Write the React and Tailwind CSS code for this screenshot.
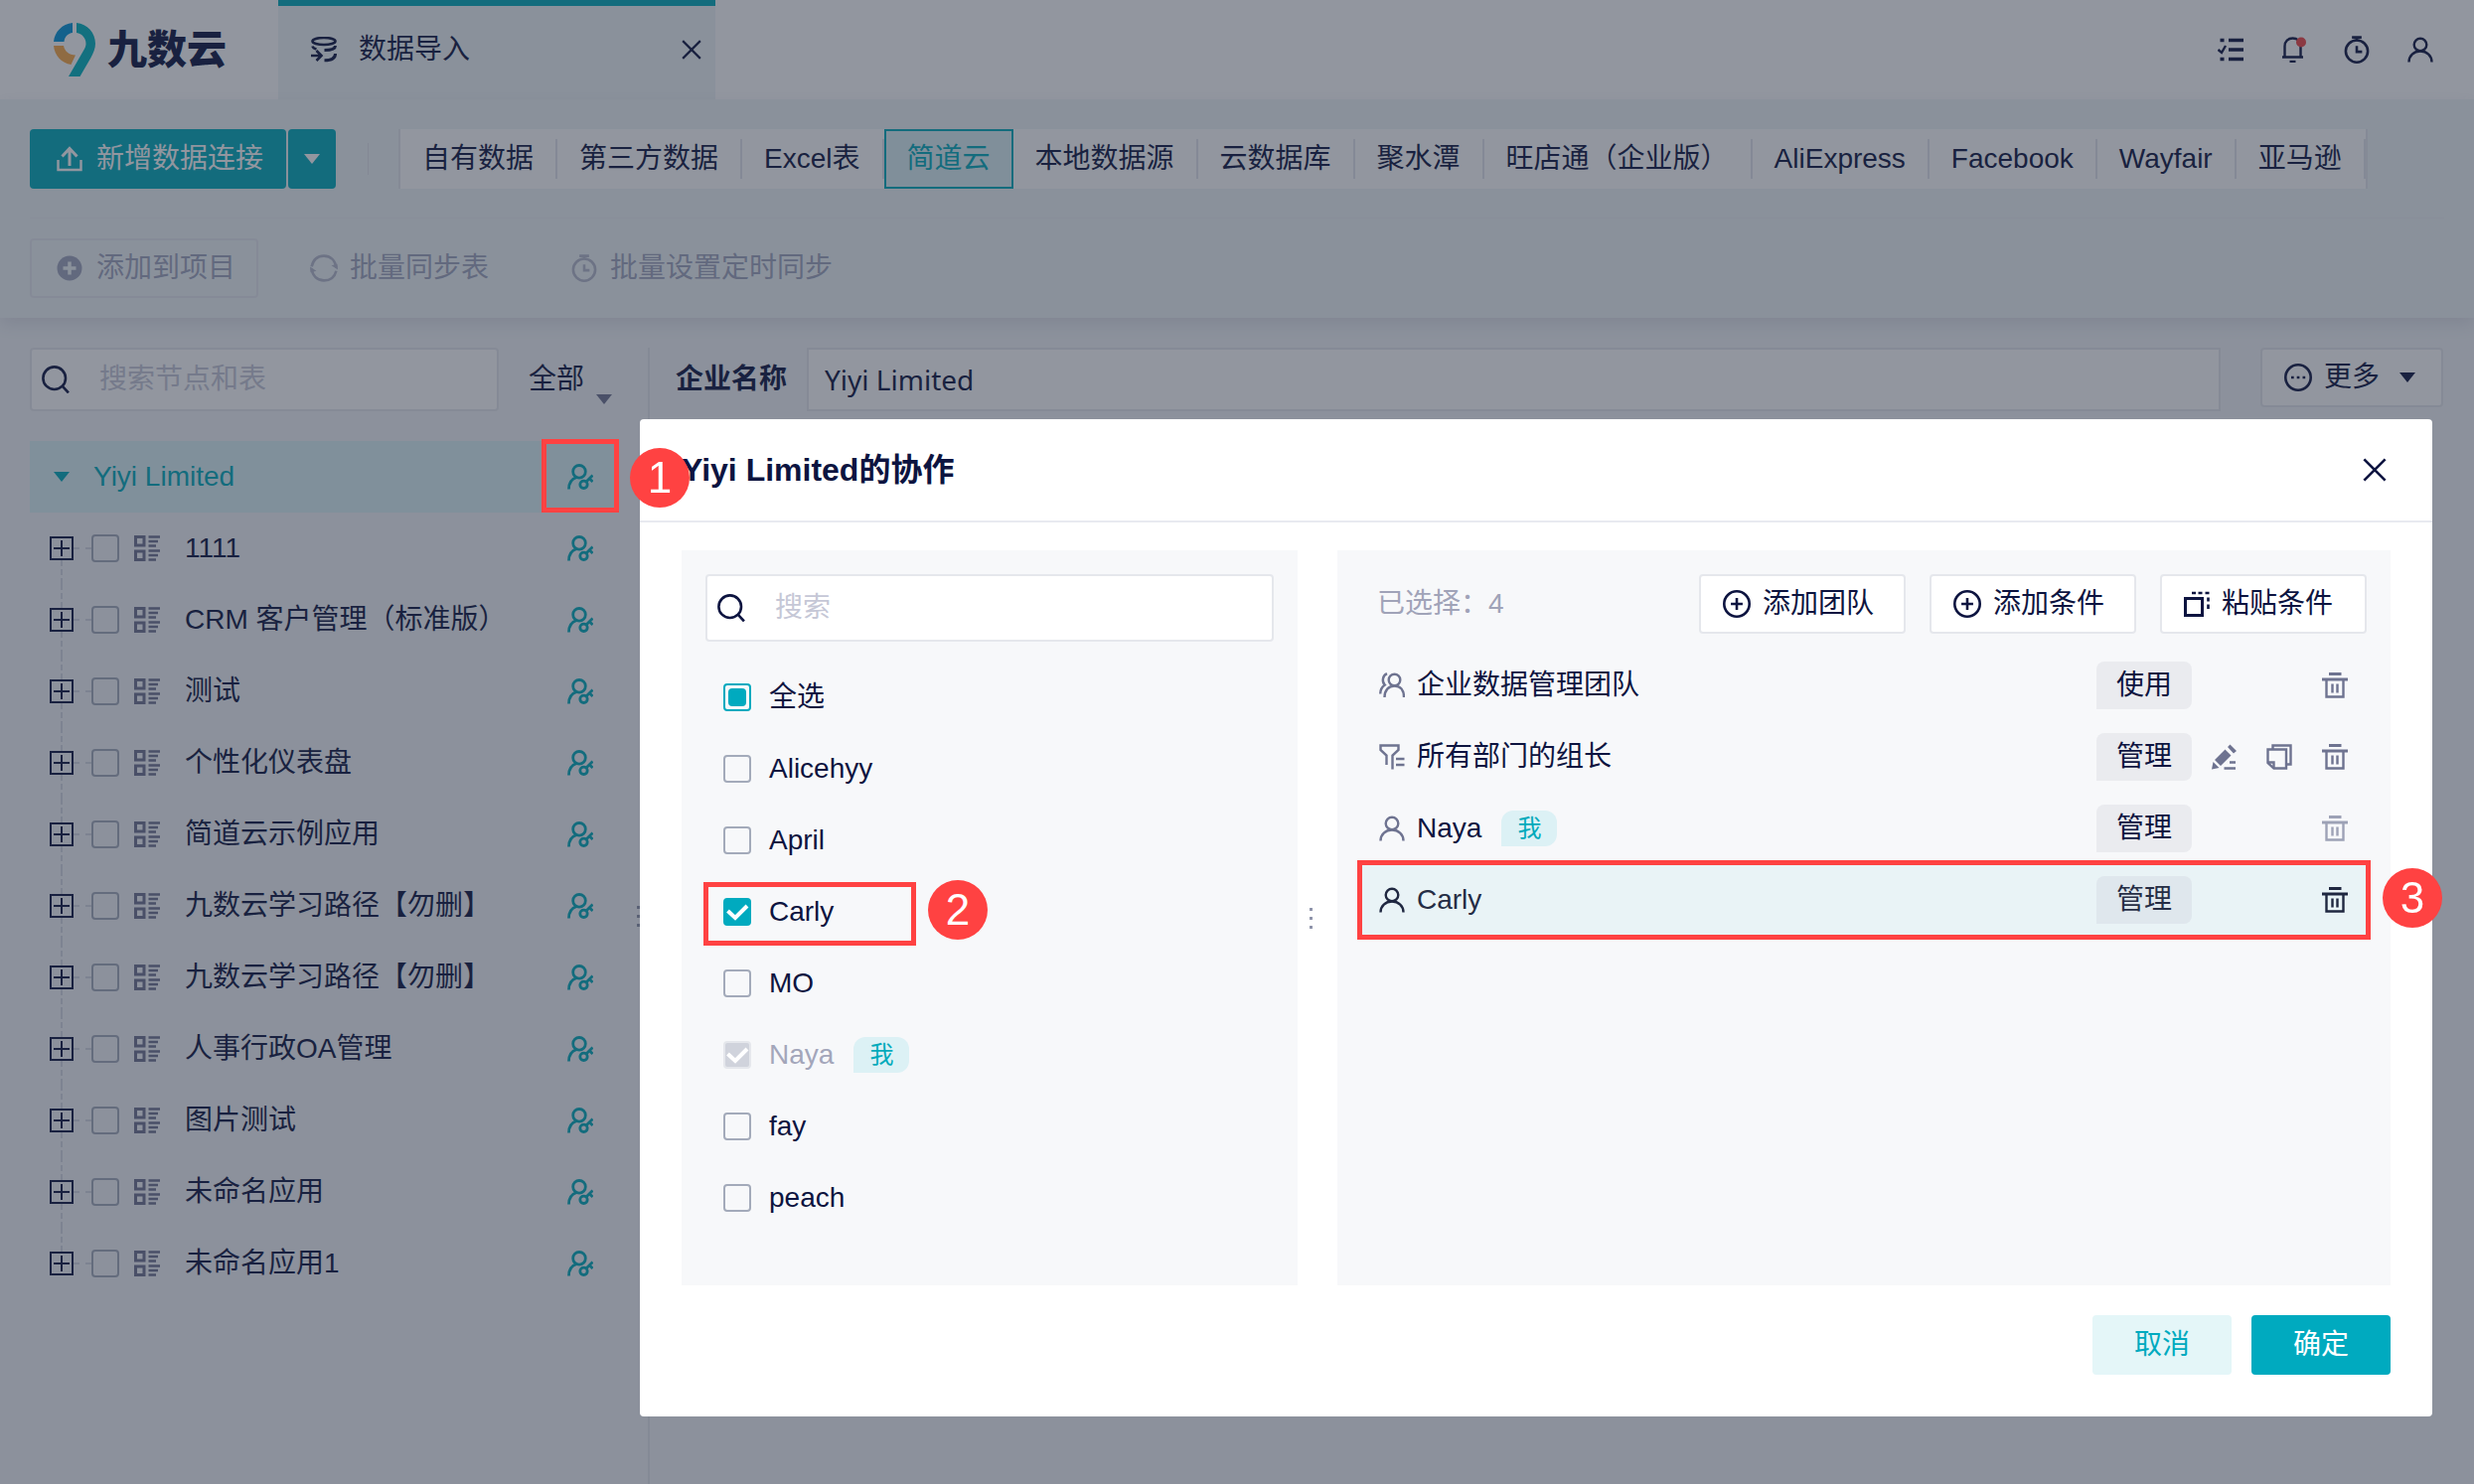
import React, { useState } from 'react';

const sources = ['自有数据', '第三方数据', 'Excel表', '简道云', '本地数据源', '云数据库', '聚水潭', '旺店通（企业版）', 'AliExpress', 'Facebook', 'Wayfair', '亚马逊'];

const apps = [
  '1111',
  'CRM 客户管理（标准版）',
  '测试',
  '个性化仪表盘',
  '简道云示例应用',
  '九数云学习路径【勿删】',
  '九数云学习路径【勿删】',
  '人事行政OA管理',
  '图片测试',
  '未命名应用',
  '未命名应用1',
];

const people = [
  { name: 'Alicehyy' },
  { name: 'April' },
  { name: 'Carly', marked: true },
  { name: 'MO' },
  { name: 'Naya', me: true, locked: true },
  { name: 'fay' },
  { name: 'peach' },
];

const selected = [
  { name: '企业数据管理团队', kind: 'team', role: '使用' },
  { name: '所有部门的组长', kind: 'filter', role: '管理', editable: true },
  { name: 'Naya', kind: 'user', role: '管理', me: true },
  { name: 'Carly', kind: 'user', role: '管理', active: true },
];

// ---------- icons ----------

const Svg = ({ size = 26, className = '', children }) => (
  <svg
    width={size}
    height={size}
    viewBox="0 0 26 26"
    fill="none"
    stroke="currentColor"
    strokeWidth="2.4"
    aria-hidden="true"
    className={`shrink-0 ${className}`}
  >
    {children}
  </svg>
);

const LogoMark = () => (
  <svg width="42" height="54" viewBox="0 0 42 54" aria-hidden="true" className="shrink-0">
    <path d="M23 0C34 1 42 10 42 21C42 26 40 30 37.500 35L26.500 54H15L30 28C31.500 25.500 32.500 23.500 32.500 21C32.500 15 28.500 11 23 10Z" fill="#01b3bf" />
    <path d="M19 0V10C14.500 10.500 11 14 10.500 19H0C1 9 8.500 1 19 0Z" fill="#0295d8" />
    <path d="M0 23H10C11 28.500 15.500 32.500 22 32.500L17.500 42C8 40.500 1 33 0 23Z" fill="#f9a845" />
  </svg>
);

const ImportIcon = () => (
  <Svg>
    <ellipse cx="13" cy="4.500" rx="11.500" ry="3.500" strokeWidth="2.600" />
    <path d="M24.500 9C24.500 12 20 13.500 13.500 13.500M24.500 17C24.500 22 20 23.800 13.500 23.800" strokeWidth="3" />
    <path d="M0 19H9.500M5.500 14L10.500 19L5.500 24M1.500 9.500C2 11.500 3.500 12 5.500 12.500" strokeWidth="2.600" />
  </Svg>
);

const CloseIcon = ({ size = 26 }) => (
  <Svg size={size}>
    <path d="M1.500 1.500L24.500 24.500M24.500 1.500L1.500 24.500" strokeWidth="2.900" />
  </Svg>
);

const ListIcon = () => (
  <Svg>
    <path d="M11 3.500H26M11 13H26M11 22.500H26" strokeWidth="3.600" />
    <path d="M2.500 3.500H6.500M2.500 22.500H6.500" strokeWidth="3.600" />
    <path d="M0.500 13L4 16L8 9" />
  </Svg>
);

const BellIcon = () => (
  <Svg>
    <path d="M2 20.500H23M4.500 20.500V9.500C4.500 4.500 8 1.500 12.500 1.500S20.500 4.500 20.500 9.500V20.500" />
    <path d="M9.500 25H15.500" />
    <circle cx="21" cy="5.500" r="5" fill="#f04444" stroke="none" />
  </Svg>
);

const WatchIcon = ({ size = 28, className }) => (
  <Svg size={size} className={className}>
    <circle cx="13" cy="14.500" r="10.300" />
    <path d="M8.500 1.500H17.500M13 2V5M13 9.500V15H18" />
  </Svg>
);

const UserIcon = ({ className }) => (
  <Svg className={className}>
    <circle cx="13" cy="8" r="6.300" />
    <path d="M1.500 25.500C1.500 19 6.500 14.500 13 14.500S24.500 19 24.500 25.500" />
  </Svg>
);

const TeamIcon = ({ className }) => (
  <Svg className={className}>
    <circle cx="15.500" cy="7.500" r="5.800" />
    <path d="M5.500 25C5.500 18 9.500 13.500 15.500 13.500S25 18 25 25" />
    <path d="M8 1.200C3 3.500 2.800 9.500 5.800 12.500C3 14.500 1.200 17.500 1.200 21.500" />
  </Svg>
);

const FilterIcon = ({ className }) => (
  <Svg className={className}>
    <path d="M7.500 21V11.500L1.500 6V1.500H19.500V6L13.500 11.500V25.500" />
    <path d="M17 15H25.500M17 21H25.500" />
  </Svg>
);

const UserKeyIcon = () => (
  <Svg>
    <g strokeWidth="2.800">
      <circle cx="12" cy="7.800" r="6.300" />
      <path d="M1.500 25.500C1.500 18.500 4.500 15 9.500 13.500" />
      <circle cx="16.500" cy="20.800" r="3.700" />
      <path d="M19 18L25.500 11.500M22 14.500L25.500 18" />
    </g>
  </Svg>
);

const SearchIcon = () => (
  <Svg size={28} className="text-[#0d1440]">
    <circle cx="11.800" cy="11.800" r="10.500" />
    <path d="M19 19L25 25.500" />
  </Svg>
);

const UploadIcon = () => (
  <Svg>
    <path d="M1.500 14V24H24.500V14" />
    <path d="M13 20V3M5.500 10.500L13 2.500L20.500 10.500" strokeWidth="3" />
  </Svg>
);

const PlusSolidIcon = () => (
  <Svg>
    <circle cx="13" cy="13" r="12.500" fill="currentColor" stroke="none" />
    <path d="M13 6.500V19.500M6.500 13H19.500" stroke="#eff5f7" strokeWidth="3.500" />
  </Svg>
);

const PlusCircleIcon = () => (
  <Svg size={28}>
    <circle cx="13" cy="13" r="11.800" />
    <path d="M13 7.500V18.500M7.500 13H18.500" />
  </Svg>
);

const SyncIcon = () => (
  <Svg size={28} className="text-[#b4b8cb]">
    <path d="M1.500 11.500C3 5 7.500 1.500 13 1.500C19 1.500 23.500 5.500 24.500 12.500" />
    <path d="M24.500 15.500C23 21.500 18.500 24.500 13 24.500C7 24.500 2.500 20.500 1.500 13.500" />
    <path d="M0 11.500L6 15.500L0.500 17ZM26 14.500L20 10.500L25.500 9Z" fill="currentColor" stroke="none" />
  </Svg>
);

const MoreIcon = () => (
  <Svg size={28}>
    <circle cx="13" cy="13" r="11.800" />
    <path d="M6.500 13H9M11.800 13H14.300M17.200 13H19.700" />
  </Svg>
);

const PasteIcon = () => (
  <Svg>
    <path d="M1.500 7.500H18.500V24.500H1.500Z" strokeWidth="3" />
    <path d="M8 2H12M14.500 2H18.500M21.500 2H25.500M24.500 6.500V10.500M24.500 13.500V18" strokeWidth="2.600" />
  </Svg>
);

const AppIcon = () => (
  <Svg className="text-[#6e7390]">
    <path d="M1.500 1.500H10V10H1.500ZM1.500 16H10V24.500H1.500Z" strokeWidth="3" />
    <path d="M14.500 1.500H26M14.500 6H24M14.500 10.500H22M14.500 15.500H26M14.500 20H24M14.500 24.500H22" />
  </Svg>
);

const TrashIcon = () => (
  <Svg>
    <path d="M7 1.500H19.500M0 7H26" strokeWidth="3" />
    <path d="M4.500 8V24.500H21.500V8M10.500 11.500V20.500M15.500 11.500V20.500" />
  </Svg>
);

const EditIcon = () => (
  <Svg>
    <path d="M4 16L14.500 5.500L20.500 11.500L10 22Z M17 3L19.500 0.500L26 7L23 9.500Z M2.500 18L8.500 24L1 25.500Z" fill="currentColor" stroke="none" />
    <path d="M19 18.500H25M13.500 24.500H25" />
  </Svg>
);

const CopyIcon = () => (
  <Svg>
    <path d="M6.500 5V1.500H24.500V20.500H21" />
    <path d="M1.500 5.500H20V24.500H7.500L1.500 19Z" />
    <path d="M1.500 18.500H7.500V24.500" />
  </Svg>
);

const CheckMark = () => (
  <svg width="28" height="28" viewBox="0 0 28 28" fill="none" stroke="#fff" strokeWidth="4" aria-hidden="true" className="pointer-events-none absolute inset-0">
    <path d="M4.500 13L12 20L24 8" />
  </svg>
);

const Caret = ({ className = '' }) => (
  <svg width="16" height="10" viewBox="0 0 16 10" fill="currentColor" aria-hidden="true" className={`shrink-0 ${className}`}>
    <path d="M0 0H16L8 10Z" />
  </svg>
);

// ---------- small parts ----------

const Badge = ({ n, className }) => (
  <span className={`absolute z-10 flex size-[60px] items-center justify-center rounded-full bg-[#ff4242] font-['Liberation_Sans',sans-serif] text-[44px] leading-none text-white ${className}`}>
    {n}
  </span>
);

const MeTag = () => (
  <span className="flex h-9 w-14 items-center justify-center rounded-xl rounded-bl-none bg-[#dcf1f5] text-[24px] leading-none text-[#00aabb]">我</span>
);

const Dots = ({ className = '' }) => (
  <span className={`flex flex-col gap-1.5 ${className}`}>
    <i className="size-[3px] bg-[#8f94ab]" />
    <i className="size-[3px] bg-[#8f94ab]" />
    <i className="size-[3px] bg-[#8f94ab]" />
  </span>
);

const SearchBox = ({ placeholder, className }) => (
  <label className={`flex items-center gap-[30px] rounded border-2 border-[#e5e7ec] bg-white pl-2.5 ${className}`}>
    <SearchIcon />
    <input type="text" aria-label={placeholder} placeholder={placeholder} className="w-full min-w-0 bg-transparent outline-none placeholder:text-[#c5c7d6]" />
  </label>
);

const SourceBar = () => (
  <nav className="flex h-[60px] items-stretch border-x-2 border-[#e5e7ec] bg-white">
    {sources.map((name) =>
      name === '简道云' ? (
        <button key={name} className="border-2 border-[#00aabb] bg-[#dbf1f5] px-[21px] text-[#00aabb]">
          {name}
        </button>
      ) : (
        <button key={name} className="flex items-center justify-between pl-[22px]">
          {name}
          <i className="ml-[22px] h-10 w-0.5 bg-[#e3e5ec]" />
        </button>
      )
    )}
  </nav>
);

const TreeRow = ({ name, index }) => (
  <li className="flex h-[72px] items-center pr-[25px] pl-5">
    <span className="flex h-full w-6 flex-col items-center">
      <i className={`flex-1 border-l-2 border-dashed ${index === 0 ? 'border-transparent' : 'border-[#d4d8e2]'}`} />
      <button aria-label="展开" className="flex size-6 items-center justify-center border-2 border-[#0d1440]">
        <svg width="16" height="16" viewBox="0 0 16 16" stroke="currentColor" strokeWidth="2" aria-hidden="true">
          <path d="M8 0V16M0 8H16" />
        </svg>
      </button>
      <i className={`flex-1 border-l-2 border-dashed ${index === apps.length - 1 ? 'border-transparent' : 'border-[#d4d8e2]'}`} />
    </span>
    <i className="w-[18px] border-t-2 border-dashed border-[#d4d8e2]" />
    <input type="checkbox" id={`app-${index}`} className="size-7 shrink-0 appearance-none rounded border-2 border-[#a3aaba]" />
    <span className="ml-[15px] flex">
      <AppIcon />
    </span>
    <label htmlFor={`app-${index}`} className="ml-[25px] flex-1 whitespace-nowrap">
      {name}
    </label>
    <button aria-label="协作" className="text-[#00aabb]">
      <UserKeyIcon />
    </button>
  </li>
);

const PersonRow = ({ person, checked, onToggle }) => {
  const { name, locked, me, marked } = person;
  let box = 'border-[#a3aaba]';
  if (locked) box = 'border-[#e5e7ec] bg-[#d0d3dc]';
  else if (checked) box = 'border-[#00aabf] bg-[#00aabf]';

  return (
    <li className="relative flex h-[72px] items-center pl-[18px]">
      <label className={`flex items-center gap-[18px] ${locked ? 'text-[#a3a6ba]' : ''}`}>
        <span className="relative flex">
          <input type="checkbox" checked={checked} disabled={locked} onChange={onToggle} className={`size-7 appearance-none rounded border-2 ${box}`} />
          {checked && <CheckMark />}
        </span>
        {name}
      </label>
      {me && (
        <span className="ml-5">
          <MeTag />
        </span>
      )}
      {marked && (
        <>
          <span className="pointer-events-none absolute top-1.5 -left-0.5 h-16 w-[214px] border-5 border-[#ff4242]" />
          <Badge n="2" className="top-1 left-[224px]" />
        </>
      )}
    </li>
  );
};

const kindIcons = { team: TeamIcon, filter: FilterIcon, user: UserIcon };

const SelectedRow = ({ item }) => {
  const Icon = kindIcons[item.kind];
  return (
    <li className={`relative flex h-[72px] items-center pr-1.5 pl-5 ${item.active ? 'bg-[#e9f3f6] text-[#252d45]' : ''}`}>
      <Icon className={item.active ? 'text-[#1f2740]' : 'text-[#6e7390]'} />
      <span className="ml-3">{item.name}</span>
      {item.me && (
        <span className="ml-5">
          <MeTag />
        </span>
      )}
      <button className={`mr-1 ml-auto h-12 w-24 rounded-lg rounded-bl-none ${item.active ? 'bg-[#dfe7ed]' : 'bg-[#eaebef]'}`}>{item.role}</button>
      <span className={`flex w-[168px] justify-end ${item.active ? 'text-[#1f2740]' : item.me ? 'text-[#9da2b6]' : 'text-[#6e7390]'}`}>
        {item.editable && (
          <>
            <button aria-label="编辑" className="flex w-14 justify-center">
              <EditIcon />
            </button>
            <button aria-label="复制" className="flex w-14 justify-center">
              <CopyIcon />
            </button>
          </>
        )}
        <button aria-label="删除" className="flex w-14 justify-center">
          <TrashIcon />
        </button>
      </span>
      {item.active && (
        <>
          <span className="pointer-events-none absolute -inset-x-0.5 -inset-y-1 border-5 border-[#ff4242]" />
          <Badge n="3" className="top-1 -right-[74px]" />
        </>
      )}
    </li>
  );
};

const ToolButton = ({ icon, children }) => (
  <button className="flex h-[60px] w-[208px] items-center gap-3 rounded border-2 border-[#e5e7ec] bg-white pl-[22px] whitespace-nowrap">
    {icon}
    {children}
  </button>
);

const ShareDialog = () => {
  const [checked, setChecked] = useState(['Carly', 'Naya']);

  const toggle = (name) =>
    setChecked((list) => (list.includes(name) ? list.filter((n) => n !== name) : [...list, name]));

  return (
    <div className="fixed inset-0 flex items-start justify-end bg-[#252d3f]/50 pt-[422px] pr-[42px]">
      <section role="dialog" aria-label="Yiyi Limited的协作" className="relative w-full max-w-[1804px] rounded bg-white">
        <span className="pointer-events-none absolute top-5 -left-[99px] h-[74px] w-[78px] border-5 border-[#ff4242]" />
        <Badge n="1" className="top-[29px] -left-2.5" />

        <header className="flex h-[104px] items-center justify-between border-b-2 border-[#e8eaf0] pr-[46px] pl-[42px]">
          <h2 className="text-[32px] font-bold">Yiyi Limited的协作</h2>
          <button aria-label="关闭">
            <CloseIcon size={24} />
          </button>
        </header>

        <div className="flex px-[42px] pt-7">
          <div className="min-h-[740px] w-[620px] bg-[#f7f8fa] p-6">
            <SearchBox placeholder="搜索" className="h-[68px]" />
            <ul className="mt-5">
              <li className="flex h-[72px] items-center pl-[18px]">
                <label className="flex items-center gap-[18px]">
                  <span className="relative flex">
                    <input type="checkbox" className="size-7 appearance-none rounded border-2 border-[#00aabf]" />
                    <i className="pointer-events-none absolute inset-[5px] rounded-sm bg-[#00aabf]" />
                  </span>
                  全选
                </label>
              </li>
              {people.map((p) => (
                <PersonRow key={p.name} person={p} checked={checked.includes(p.name)} onToggle={() => toggle(p.name)} />
              ))}
            </ul>
          </div>

          <Dots className="w-10 self-center pl-3" />

          <div className="min-w-0 flex-1 bg-[#f7f8fa] px-[22px] pt-6">
            <div className="flex items-center gap-6 pr-0.5 pl-[18px]">
              <span className="mr-auto text-[#a0a3b8]">已选择：4</span>
              <ToolButton icon={<PlusCircleIcon />}>添加团队</ToolButton>
              <ToolButton icon={<PlusCircleIcon />}>添加条件</ToolButton>
              <ToolButton icon={<PasteIcon />}>粘贴条件</ToolButton>
            </div>
            <ul className="mt-4">
              {selected.map((item) => (
                <SelectedRow key={item.name} item={item} />
              ))}
            </ul>
          </div>
        </div>

        <footer className="flex justify-end gap-5 px-[42px] pt-[30px] pb-[42px]">
          <button className="h-[60px] w-[140px] rounded bg-[#e4f6f8] text-[#00aabf]">取消</button>
          <button className="h-[60px] w-[140px] rounded bg-[#00aabf] text-white">确定</button>
        </footer>
      </section>
    </div>
  );
};

const App = () => {
  return (
    <div className="flex min-h-screen flex-col bg-[#f2f5f8] font-['Liberation_Sans','Noto_Sans_CJK_SC',sans-serif] text-[28px] leading-10 text-[#0d1440]">
      <header className="flex h-[100px] items-center bg-white pr-[41px]">
        <div className="flex w-[280px] items-center gap-3 pl-[54px]">
          <LogoMark />
          <span className="text-[40px] font-black whitespace-nowrap">九数云</span>
        </div>
        <div className="flex h-full w-[440px] items-center border-t-[6px] border-[#00aabb] bg-[#eff5f7] px-3.5 pb-1.5">
          <span className="ml-[19px] flex">
            <ImportIcon />
          </span>
          <span className="ml-[22px] flex-1">数据导入</span>
          <button aria-label="关闭标签">
            <CloseIcon size={20} />
          </button>
        </div>
        <div className="ml-auto flex items-center gap-[37px]">
          <button aria-label="任务"><ListIcon /></button>
          <button aria-label="消息"><BellIcon /></button>
          <button aria-label="定时"><WatchIcon /></button>
          <button aria-label="账户"><UserIcon /></button>
        </div>
      </header>

      <section className="relative bg-[#eff5f7] px-[30px] pt-[30px] pb-5 shadow-[0_6px_16px_rgba(60,60,100,0.12)]">
        <div className="flex h-[60px] items-center">
          <button className="flex h-full w-[258px] items-center gap-3.5 rounded bg-[#00aabb] pl-[27px] whitespace-nowrap text-white">
            <UploadIcon />
            新增数据连接
          </button>
          <button aria-label="更多连接方式" className="ml-0.5 flex h-full w-12 items-center justify-center rounded bg-[#00aabb] text-white">
            <Caret />
          </button>
          <i className="mr-[30px] ml-8 h-8 w-px bg-[#e0e3ea]" />
          <SourceBar />
        </div>
        <div className="mt-[29px] flex items-center border-t border-[#eceef4] pt-5 text-[#9fa4bd]">
          <button className="flex h-[60px] items-center gap-3.5 rounded border-2 border-[#e5e7ee] pr-[21px] pl-[25px]">
            <PlusSolidIcon />
            添加到项目
          </button>
          <button className="ml-[52px] flex items-center gap-3">
            <SyncIcon />
            批量同步表
          </button>
          <button className="ml-[82px] flex items-center gap-3">
            <WatchIcon className="text-[#b4b8cb]" />
            批量设置定时同步
          </button>
        </div>
      </section>

      <main className="flex flex-1 pt-[30px]">
        <aside className="flex w-[654px] shrink-0 border-r-2 border-[#e3e6ec] pl-[30px]">
          <div className="w-[592px]">
            <div className="flex h-16">
              <SearchBox placeholder="搜索节点和表" className="h-full w-[472px]" />
              <label className="ml-[30px] flex items-center">
                <select aria-label="范围" className="w-16 appearance-none bg-transparent outline-none">
                  <option>全部</option>
                </select>
                <Caret className="mt-10 ml-1 text-[#6e7390]" />
              </label>
            </div>
            <div className="mt-[30px] flex h-[72px] items-center bg-[#dbf3f6] pr-[25px] pl-6 text-[#00aabb]">
              <Caret />
              <span className="ml-6 flex-1">Yiyi Limited</span>
              <button aria-label="协作">
                <UserKeyIcon />
              </button>
            </div>
            <ul>
              {apps.map((name, i) => (
                <TreeRow key={i} name={name} index={i} />
              ))}
            </ul>
          </div>
          <Dots className="ml-auto self-center pr-2" />
        </aside>

        <div className="flex h-16 flex-1 items-center pr-[31px] pl-[26px]">
          <label htmlFor="company" className="font-bold whitespace-nowrap">企业名称</label>
          <input
            id="company"
            type="text"
            defaultValue="Yiyi Limited"
            className="ml-5 h-full min-w-0 flex-1 border-2 border-[#e5e7ec] bg-white px-4 font-['Noto_Sans',sans-serif] outline-none"
          />
          <button className="mb-1 ml-10 flex h-[60px] items-center rounded border-2 border-[#e5e7ec] bg-white pr-[26px] pl-[22px] whitespace-nowrap">
            <MoreIcon />
            <span className="ml-3">更多</span>
            <Caret className="ml-5" />
          </button>
        </div>
      </main>

      <ShareDialog />
    </div>
  );
};

export default App;
